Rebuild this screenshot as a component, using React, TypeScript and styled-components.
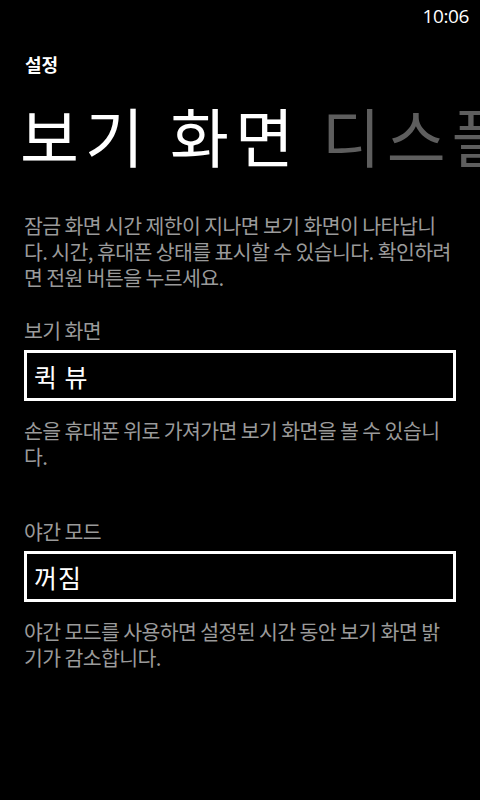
import styled, { createGlobalStyle } from "styled-components";

const GlobalStyle = createGlobalStyle`
  html, body {
    margin: 0;
    padding: 0;
    background: #000;
  }
  body {
    font-family: "Noto Sans CJK KR", "Noto Sans", sans-serif;
    color: #fff;
  }
`;

const settings = [
  {
    label: "보기 화면",
    value: "퀵 뷰",
    hint: "손을 휴대폰 위로 가져가면 보기 화면을 볼 수 있습니다.",
  },
  {
    label: "야간 모드",
    value: "꺼짐",
    hint: "야간 모드를 사용하면 설정된 시간 동안 보기 화면 밝기가 감소합니다.",
  },
];

const App = () => {
  return (
    <>
      <GlobalStyle />
      <Screen>
        <StatusBar>
          <Clock>10:06</Clock>
        </StatusBar>
        <AppTitle>설정</AppTitle>
        <Pivot>
          <PivotItem $active>보기 화면</PivotItem>
          <PivotItem>디스플레이</PivotItem>
        </Pivot>
        <Content>
          <Intro>
            잠금 화면 시간 제한이 지나면 보기 화면이 나타납니다. 시간, 휴대폰
            상태를 표시할 수 있습니다. 확인하려면 전원 버튼을 누르세요.
          </Intro>
          {settings.map((s, i) => (
            <Setting key={i} $first={i === 0}>
              <Label>{s.label}</Label>
              <Picker>{s.value}</Picker>
              <Hint>{s.hint}</Hint>
            </Setting>
          ))}
        </Content>
      </Screen>
    </>
  );
};

export default App;

const Screen = styled.div`
  width: 480px;
  height: 800px;
  overflow: hidden;
  background: #000;
`;

const StatusBar = styled.div`
  height: 32px;
  display: flex;
  justify-content: flex-end;
  align-items: center;
  padding-right: 11px;
`;

const Clock = styled.span`
  font-family: "Open Sans", "Noto Sans", sans-serif;
  font-size: 19px;
  letter-spacing: -0.4px;
  color: #fff;
`;

const AppTitle = styled.div`
  margin: 18px 0 0 25px;
  font-size: 18px;
  font-weight: 700;
  line-height: 28px;
`;

const Pivot = styled.div`
  display: flex;
  gap: 22px;
  margin: 13px 0 0 20px;
  white-space: nowrap;
  overflow: hidden;
`;

const PivotItem = styled.span<{ $active?: boolean }>`
  font-size: 64px;
  line-height: 86px;
  letter-spacing: 6px;
  color: ${({ $active }) => ($active ? "#fff" : "#5e5e5e")};
`;

const Content = styled.div`
  padding: 0 24px;
`;

const Intro = styled.p`
  margin: 35px 0 0;
  font-size: 20.5px;
  line-height: 26px;
  letter-spacing: -0.6px;
  color: #9a9a9a;
`;

const Setting = styled.div<{ $first?: boolean }>`
  margin-top: ${({ $first }) => ($first ? "27px" : "49px")};
`;

const Label = styled.div`
  font-size: 20.5px;
  line-height: 26px;
  letter-spacing: -0.6px;
  color: #9a9a9a;
`;

const Picker = styled.div`
  margin-top: 7px;
  height: 45px;
  border: 3px solid #fff;
  padding: 0 7px;
  display: flex;
  align-items: center;
  font-size: 25px;
  letter-spacing: 1px;
  color: #fff;
`;

const Hint = styled.p`
  margin: 16px 0 0;
  font-size: 20.5px;
  line-height: 26px;
  letter-spacing: -0.6px;
  color: #9a9a9a;
`;
